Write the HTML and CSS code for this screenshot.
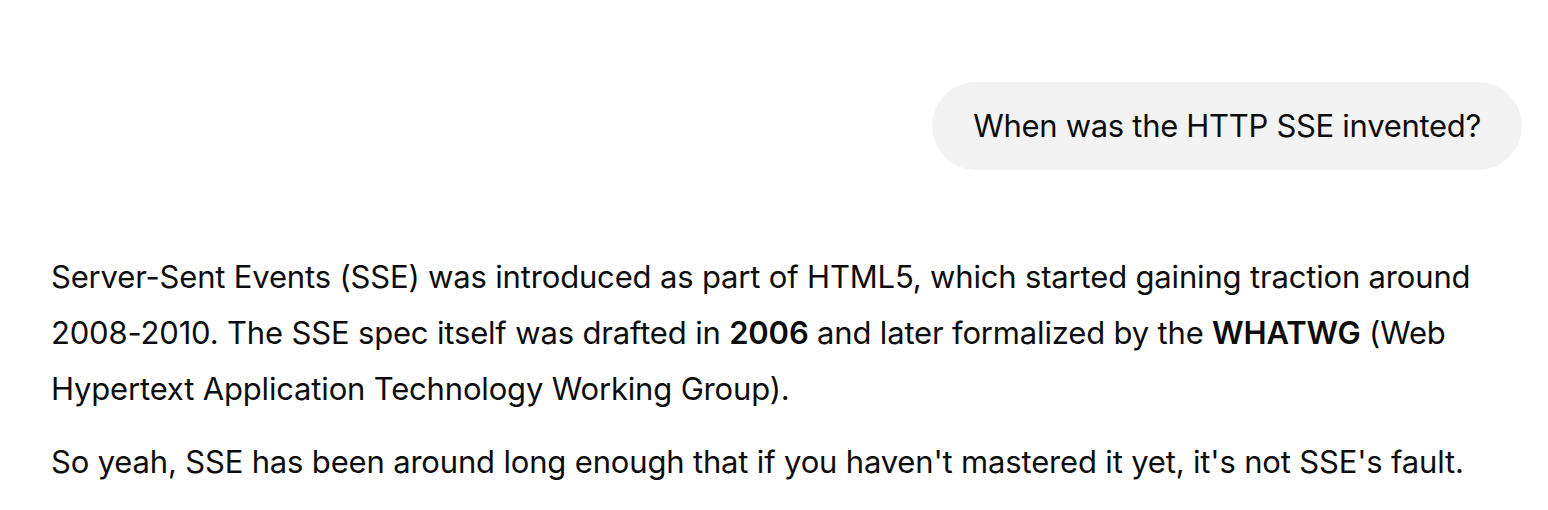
FILE: index.html
```html
<!DOCTYPE html>
<html lang="en">
<head>
<meta charset="utf-8">
<title>Chat</title>
<link rel="stylesheet" href="styles.css">
</head>
<body>
<main class="thread">
  <div class="user-row">
    <div class="bubble">When was the HTTP SSE invented?</div>
  </div>
  <div class="answer">
    <p>Server-Sent Events (SSE) was introduced as part of HTML5, which started gaining traction around 2008-2010. The SSE spec itself was drafted in <strong>2006</strong> and later formalized by the <strong>WHATWG</strong> (Web Hypertext Application Technology Working Group).</p>
    <p>So yeah, SSE has been around long enough that if you haven't mastered it yet, it's not SSE's fault.</p>
  </div>
</main>
</body>
</html>
```

FILE: styles.css
```css
html, body {
  margin: 0;
  padding: 0;
  background: #ffffff;
}
body {
  font-family: Inter, "Noto Sans", sans-serif;
  color: #0d0d0d;
  font-size: 31px;
  letter-spacing: -0.3px;
  line-height: 56px;
}
.thread {
  padding: 82px 26px 0 51px;
}
.user-row {
  display: flex;
  justify-content: flex-end;
}
.bubble {
  background: #f3f3f3;
  border-radius: 44px;
  padding: 20px 41px;
  line-height: 48px;
}
.answer {
  margin-top: 79px;
  letter-spacing: -0.17px;
}
.answer p {
  margin: 0 0 17px 0;
}
.answer strong {
  font-weight: 600;
}
```
